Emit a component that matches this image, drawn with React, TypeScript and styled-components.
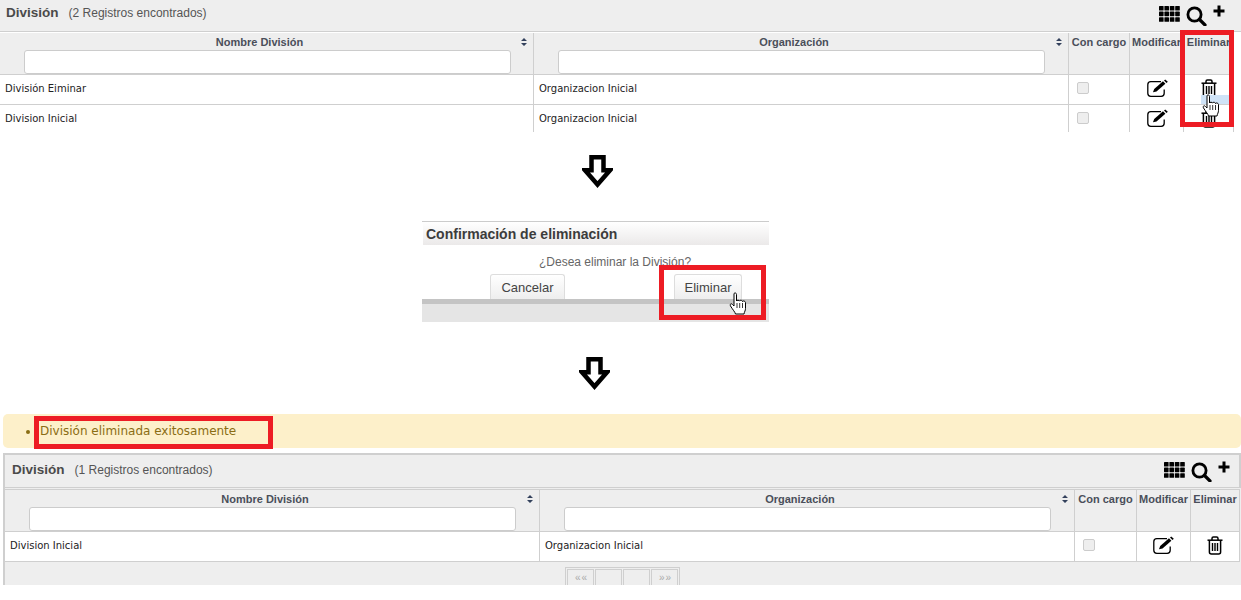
import React from "react";
import styled, { createGlobalStyle } from "styled-components";

const Global = createGlobalStyle`
  html, body { margin: 0; padding: 0; background: #fff; }
  body { font-family: "Liberation Sans", Arial, sans-serif; }
`;

const Page = styled.div`
  position: relative;
  width: 1241px;
  height: 600px;
  overflow: hidden;
  background: #fff;
`;

const Panel = styled.section<{ $framed?: boolean }>`
  box-sizing: border-box;
  overflow: hidden;
  ${(p) =>
    p.$framed
      ? `height: 132px; margin: 5px 0 0 3px; border: 2px solid #cfcfcf; border-bottom: 0; border-right: 0; background: #eee;`
      : `height: 132px; background: #fff;`}
`;

const TitleBar = styled.header<{ $framed?: boolean }>`
  box-sizing: border-box;
  height: ${(p) => (p.$framed ? 33 : 32)}px;
  display: flex;
  align-items: flex-start;
  justify-content: space-between;
  padding: ${(p) => (p.$framed ? "7px 8px 0 7px" : "5px 8px 0 6px")};
  background: #eee;
  border-bottom: 1px solid #cfcfcf;
  border-right: ${(p) => (p.$framed ? "2px solid #cfcfcf" : "0")};
  color: #444;
`;

const TitleText = styled.div`
  display: flex;
  align-items: baseline;
  gap: 10px;
`;

const Title = styled.h2`
  margin: 0;
  font-size: 13.5px;
  line-height: 16px;
  font-weight: 700;
  color: #4a4a4a;
`;

const Count = styled.span`
  font-size: 12px;
  color: #555;
`;

const Tools = styled.div<{ $framed?: boolean }>`
  display: flex;
  align-items: flex-start;
  gap: 6px;
  margin-top: ${(p) => (p.$framed ? "-1px" : "0")};
  margin-right: ${(p) => (p.$framed ? "1px" : "8px")};
  color: #000;
`;

const Grid = styled.div<{ $framed?: boolean }>`
  display: grid;
  grid-template-columns: ${(p) =>
    p.$framed ? "535px 535px 62px 54px 49px" : "534px 535px 61px 54px 50px"};
  width: ${(p) => (p.$framed ? "1235px" : "1234px")};
  margin-top: 1px;
  border-top: ${(p) => (p.$framed ? "1px solid #cfcfcf" : "0")};
`;

const HeadCell = styled.div<{ $sortable?: boolean }>`
  box-sizing: border-box;
  height: 42px;
  position: relative;
  padding-top: 3px;
  padding-right: ${(p) => (p.$sortable ? "14px" : "0")};
  background: #eee;
  border-right: 1px solid #cfcfcf;
  border-bottom: 1px solid #cfcfcf;
  text-align: center;
  font-size: 11px;
  line-height: 13px;
  font-weight: 700;
  color: #4a4f5a;
  white-space: nowrap;
  overflow: hidden;
`;

const Sort = styled.svg`
  position: absolute;
  top: 5px;
  right: 6px;
`;

const FilterInput = styled.input`
  display: block;
  box-sizing: border-box;
  width: 487px;
  height: 24px;
  margin: 1px 0 0 24px;
  border: 1px solid #ccc;
  border-radius: 3px;
  background: #fff;
`;

const Cell = styled.div<{ $center?: boolean; $nudge?: number }>`
  box-sizing: border-box;
  height: 30px;
  display: flex;
  align-items: center;
  justify-content: ${(p) => (p.$center ? "center" : "flex-start")};
  padding: 0 ${(p) => (p.$center ? 0 : 4)}px 3px ${(p) => (p.$center ? p.$nudge ?? 0 : 5)}px;
  background: #fff;
  border-right: 1px solid #cfcfcf;
  border-bottom: 1px solid #cfcfcf;
  font-family: "DejaVu Sans", Verdana, sans-serif;
  font-size: 10px;
  color: #222;
  white-space: nowrap;
`;

const Check = styled.span`
  display: block;
  box-sizing: border-box;
  width: 12px;
  height: 12px;
  margin-right: 33px;
  border: 1px solid #ccc;
  border-radius: 2px;
  background: #eee;
`;

const ArrowRow = styled.div<{ $left: number; $top: number }>`
  height: 33px;
  margin: ${(p) => p.$top}px 0 0 ${(p) => p.$left}px;
  line-height: 0;
`;

const Dialog = styled.div`
  box-sizing: border-box;
  width: 347px;
  height: 101px;
  margin: 33px 0 0 422px;
  border-top: 1px solid #ccc;
  display: flex;
  flex-direction: column;
`;

const DialogTitle = styled.h3`
  box-sizing: border-box;
  height: 23px;
  margin: 0 0 0 1px;
  padding: 4px 0 0 3px;
  background: linear-gradient(#fff, #ebe9e9);
  font-size: 14px;
  line-height: 16px;
  font-weight: 700;
  color: #3c3c3c;
`;

const DialogBody = styled.p`
  margin: 11px 0 0;
  height: 18px;
  padding-left: 117px;
  font-size: 12px;
  line-height: 12px;
  color: #666;
`;

const DialogActions = styled.div`
  display: flex;
  gap: 109px;
  height: 25px;
  padding-left: 68px;
`;

const DialogButton = styled.button<{ $width: number }>`
  box-sizing: border-box;
  width: ${(p) => p.$width}px;
  height: 25px;
  padding: 0;
  border: 1px solid #ddd;
  border-bottom: 0;
  border-radius: 3px 3px 0 0;
  background: linear-gradient(#fff, #eee);
  font-family: "Liberation Sans", Arial, sans-serif;
  font-size: 13px;
  color: #444;
`;

const DialogFoot = styled.div`
  flex: 1;
  background: #e5e5e5;
  border-top: 5px solid #c4c4c4;
`;

const Message = styled.ul`
  box-sizing: border-box;
  height: 34px;
  margin: 24px 0 0 3px;
  padding: 9px 0 0 37px;
  list-style: disc;
  background: #fdf0ca;
  border-radius: 5px;
  font-family: "DejaVu Sans", Verdana, sans-serif;
  font-size: 12px;
  line-height: 16px;
  color: #8a6d14;
`;

const Pager = styled.nav`
  display: flex;
  gap: 1px;
  width: max-content;
  height: 23px;
  margin: 5px 0 0 560px;
  padding: 1px;
  border: 1px solid #cfcfcf;
  border-bottom: 0;
`;

const PageButton = styled.span`
  box-sizing: border-box;
  width: 27px;
  height: 22px;
  border: 1px solid #cfcfcf;
  border-bottom: 0;
  font-size: 10px;
  line-height: 16px;
  text-align: center;
  letter-spacing: -1px;
  color: #aaa;
`;

const RedBox = styled.div<{ $x: number; $y: number; $w: number; $h: number }>`
  position: absolute;
  box-sizing: border-box;
  left: ${(p) => p.$x}px;
  top: ${(p) => p.$y}px;
  width: ${(p) => p.$w}px;
  height: ${(p) => p.$h}px;
  border: 5px solid #ed1c24;
`;

const CursorSpot = styled.div<{ $x: number; $y: number }>`
  position: absolute;
  left: ${(p) => p.$x}px;
  top: ${(p) => p.$y}px;
  line-height: 0;
`;

const Highlight = styled.div`
  position: absolute;
  left: 1201px;
  top: 95px;
  width: 28px;
  height: 9px;
  background: #cfe3f7;
`;

const ThIcon = () => (
  <svg width="21" height="17" viewBox="0 0 21 17" fill="#000">
    {[0, 5.6, 11.2].map((y) =>
      [0, 5.4, 10.8, 16.2].map((x) => (
        <rect key={`${x}-${y}`} x={x} y={y + 1} width="4.6" height="4.6" rx="0.6" />
      ))
    )}
  </svg>
);

const SearchIcon = () => (
  <svg width="21" height="21" viewBox="0 0 21 21" fill="none" stroke="#000">
    <circle cx="8.5" cy="9.5" r="6.6" strokeWidth="2.8" />
    <path d="M13.5 14.5 L19 20" strokeWidth="3.2" strokeLinecap="round" />
  </svg>
);

const PlusIcon = () => (
  <svg width="12" height="12" viewBox="0 0 12 12" fill="#000">
    <path d="M4.5 0.500h3v4h4v3h-4v4h-3v-4h-4v-3h4z" />
  </svg>
);

const EditIcon = () => (
  <svg width="22" height="18" viewBox="0 0 22 18" fill="none">
    <path d="M14 2.700H3.800a3 3 0 0 0-3 3v8.600a3 3 0 0 0 3 3h10.400a3 3 0 0 0 3-3v-3.800" stroke="#000" strokeWidth="1.300" />
    <path d="M6 13.300 L7.200 10 L16 2.200 L18.400 4.700 L9.500 12.600 Z" fill="#000" />
    <path d="M17 1.400 L18.200 0.400 L20.800 2.800 L19.500 4 Z" fill="#000" />
  </svg>
);

const TrashIcon = () => (
  <svg width="16" height="19" viewBox="0 0 16 19" fill="none" stroke="#000" strokeWidth="1.500">
    <path d="M0.500 4.200h15" />
    <path d="M5 4V2.400Q5 1 6.400 1h3.200Q11 1 11 2.400V4" />
    <path d="M2.400 4.400V16q0 2 2 2h7.200q2 0 2-2V4.400" />
    <path d="M5.500 7v8M8 7v8M10.500 7v8" strokeWidth="1.400" />
  </svg>
);

const SortIcon = () => (
  <Sort width="6" height="8" viewBox="0 0 6 8" fill="#33415c">
    <path d="M3 0 L6 3 H0 Z M0 5 H6 L3 8 Z" />
  </Sort>
);

const DownArrow = () => (
  <svg width="31" height="33" viewBox="0 0 31 33" fill="#fff" stroke="#000" strokeWidth="4.500">
    <path d="M9.500 2.200h12v13h6.500L15.500 29.500 3 15.200h6.500z" />
  </svg>
);

const HandCursor = () => (
  <svg width="18" height="24" viewBox="0 0 18 24">
    <path
      d="M5 1.500c1-1 2.500-.5 2.500 1V9c0-1 3-1 3 0 0-1 3-1 3 .5 0-1 3-.5 3 1v6c0 2-1 3-1.500 5.500H6.500C6 20 4 18 1.500 14c-1-2 1-3 2-1.500L5 14z"
      fill="#fff"
      stroke="#000"
      strokeWidth="1"
      strokeLinejoin="round"
    />
    <path d="M8 11v5M10.700 11v5M13.500 11v5" stroke="#000" strokeWidth="0.800" />
  </svg>
);

type TableProps = {
  framed?: boolean;
  count: number;
  rows: string[];
};

const DataPanel = ({ framed, count, rows }: TableProps) => (
  <Panel $framed={framed}>
    <TitleBar $framed={framed}>
      <TitleText>
        <Title>División</Title>
        <Count>({count} Registros encontrados)</Count>
      </TitleText>
      <Tools $framed={framed}>
        <ThIcon />
        <SearchIcon />
        <PlusIcon />
      </Tools>
    </TitleBar>
    <Grid $framed={framed}>
      <HeadCell $sortable>
        Nombre División
        <SortIcon />
        <FilterInput readOnly aria-label="Nombre División" />
      </HeadCell>
      <HeadCell $sortable>
        Organización
        <SortIcon />
        <FilterInput readOnly aria-label="Organización" />
      </HeadCell>
      <HeadCell>Con cargo</HeadCell>
      <HeadCell>Modificar</HeadCell>
      <HeadCell>Eliminar</HeadCell>
      {rows.map((row) => (
        <React.Fragment key={row}>
          <Cell>{row}</Cell>
          <Cell>Organizacion Inicial</Cell>
          <Cell $center>
            <Check />
          </Cell>
          <Cell $center $nudge={framed ? 0 : 2}>
            <EditIcon />
          </Cell>
          <Cell $center>
            <TrashIcon />
          </Cell>
        </React.Fragment>
      ))}
    </Grid>
    {framed && (
      <Pager>
        <PageButton>« «</PageButton>
        <PageButton />
        <PageButton />
        <PageButton>» »</PageButton>
      </Pager>
    )}
  </Panel>
);

export default function App() {
  return (
    <Page>
      <Global />
      <DataPanel count={2} rows={["División Eiminar", "Division Inicial"]} />
      <ArrowRow $left={582} $top={23}>
        <DownArrow />
      </ArrowRow>
      <Dialog>
        <DialogTitle>Confirmación de eliminación</DialogTitle>
        <DialogBody>¿Desea eliminar la División?</DialogBody>
        <DialogActions>
          <DialogButton $width={75}>Cancelar</DialogButton>
          <DialogButton $width={68}>Eliminar</DialogButton>
        </DialogActions>
        <DialogFoot />
      </Dialog>
      <ArrowRow $left={579} $top={35}>
        <DownArrow />
      </ArrowRow>
      <Message>
        <li>División eliminada exitosamente</li>
      </Message>
      <DataPanel framed count={1} rows={["Division Inicial"]} />
      <Highlight />
      <RedBox $x={1180} $y={30} $w={54} $h={97} />
      <RedBox $x={659} $y={265} $w={107} $h={55} />
      <RedBox $x={34} $y={416} $w={239} $h={33} />
      <CursorSpot $x={1202} $y={94}>
        <HandCursor />
      </CursorSpot>
      <CursorSpot $x={729} $y={292}>
        <HandCursor />
      </CursorSpot>
    </Page>
  );
}
